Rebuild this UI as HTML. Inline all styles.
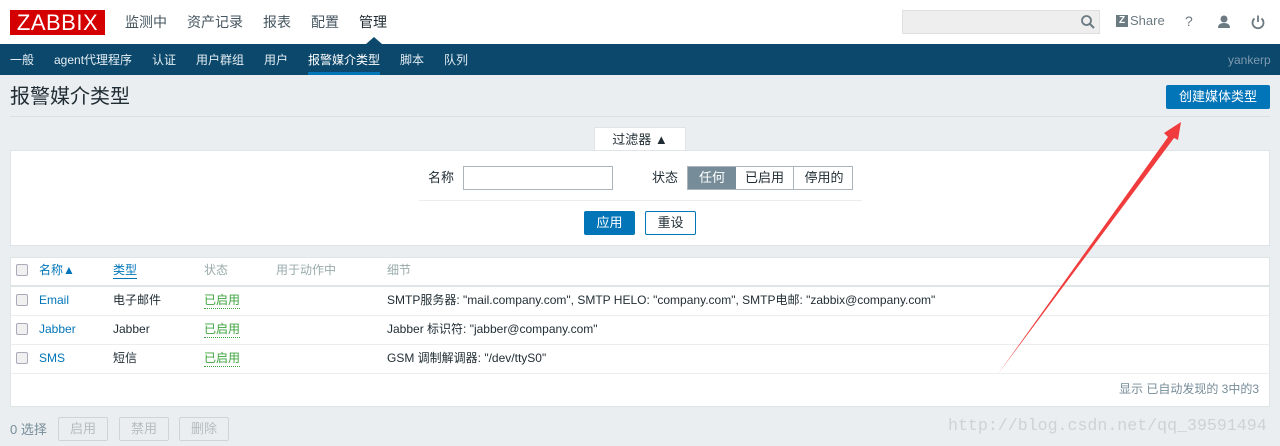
<!DOCTYPE html>
<html><head><meta charset="utf-8"><style>
*{box-sizing:border-box;margin:0;padding:0}
body{width:1280px;height:446px;overflow:hidden;background:#ebeef0;font-family:"Liberation Sans","Noto Sans CJK SC",sans-serif;font-size:12px;color:#1f2c33;position:relative}
.abs{position:absolute;line-height:16px}
.top{position:absolute;left:0;top:0;width:1280px;height:44px;background:#fff}
.logo{left:10px;top:10px;width:95px;height:25px;background:#d40000;color:#fff;font-size:22px;line-height:25px !important;text-align:center;letter-spacing:0.5px}
.mm{top:14px;font-size:14px;color:#44555f}
.nav{left:0;top:44px;width:1280px;height:31px;background:#0b486b}
.nav span{position:absolute;top:8px;line-height:16px;color:#e4eef4;font-size:12px}
.btn{background:#0275b8;color:#fff;text-align:center;border-radius:2px}
.row{position:absolute;left:10px;width:1260px;border-top:1px solid #ebeef0}
.cb{position:absolute;width:12px;height:12px;border:1px solid #aab;border-radius:2px;background:#f0f0f0;left:16px}
.lnk{color:#0275b8}
.en{color:#3ea33e;border-bottom:1px dotted #3ea33e}
.g{color:#9aa;}
.dis{position:absolute;top:417px;height:24px;border:1px solid #d0d4d6;color:#b4bcc0;font-size:13px;text-align:center;line-height:22px;width:50px;border-radius:2px}
</style></head><body>
<div class="top"></div>
<div class="abs logo">ZABBIX</div>
<div class="abs mm" style="left:125px">监测中</div>
<div class="abs mm" style="left:187px">资产记录</div>
<div class="abs mm" style="left:263px">报表</div>
<div class="abs mm" style="left:311px">配置</div>
<div class="abs mm" style="left:359px;color:#1f2c33">管理</div>
<div class="abs" style="left:366px;top:37px;width:0;height:0;border-left:8px solid transparent;border-right:8px solid transparent;border-bottom:7px solid #0b486b"></div>
<div class="abs" style="left:902px;top:10px;width:198px;height:24px;background:#eeeeee;border:1px solid #e0e0e0"></div>
<svg class="abs" style="left:1080px;top:14px" width="16" height="16"><circle cx="6.5" cy="6.5" r="4.5" fill="none" stroke="#6c7a82" stroke-width="1.8"/><line x1="10" y1="10" x2="14" y2="14" stroke="#6c7a82" stroke-width="2"/></svg>
<div class="abs" style="left:1116px;top:15px;width:12px;height:12px;background:#6c7a82;color:#fff;font-size:10px;font-weight:bold;line-height:12px;text-align:center">Z</div>
<div class="abs" style="left:1130px;top:13px;color:#6c7a82;font-size:13px">Share</div>
<div class="abs" style="left:1185px;top:13px;color:#6c7a82;font-size:14px">?</div>
<svg class="abs" style="left:1216px;top:14px" width="16" height="16"><circle cx="8" cy="5" r="3.5" fill="#6c7a82"/><path d="M2 14 Q2 9 8 9 Q14 9 14 14Z" fill="#6c7a82"/></svg>
<svg class="abs" style="left:1250px;top:14px" width="16" height="16"><path d="M4.5 4.5 A5.5 5.5 0 1 0 11.5 4.5" fill="none" stroke="#6c7a82" stroke-width="1.8"/><line x1="8" y1="1.5" x2="8" y2="8" stroke="#6c7a82" stroke-width="1.8"/></svg>
<div class="abs nav">
<span style="left:10px">一般</span><span style="left:54px">agent代理程序</span><span style="left:152px">认证</span><span style="left:196px">用户群组</span><span style="left:264px">用户</span><span style="left:308px;color:#fff">报警媒介类型</span><span style="left:400px">脚本</span><span style="left:444px">队列</span>
<span style="left:1228px;color:#7f9bb0">yankerp</span>
<div style="position:absolute;left:308px;top:28px;width:72px;height:3px;background:#0275b8"></div>
</div>
<div class="abs" style="left:10px;top:85px;font-size:20px;line-height:24px;color:#1f2c33">报警媒介类型</div>
<div class="abs btn" style="left:1166px;top:85px;width:104px;height:24px;line-height:24px;font-size:13px">创建媒体类型</div>
<div class="abs" style="left:10px;top:116px;width:1260px;height:1px;background:#dcdfe2"></div>
<div class="abs" style="left:594px;top:127px;width:92px;height:24px;background:#fff;border:1px solid #dfe4e7;border-bottom:none;text-align:center;line-height:24px;font-size:13px">过滤器 ▲</div>
<div class="abs" style="left:10px;top:150px;width:1260px;height:96px;background:#fff;border:1px solid #dfe4e7"></div>
<div class="abs" style="left:428px;top:170px;font-size:13px">名称</div>
<div class="abs" style="left:463px;top:166px;width:150px;height:24px;border:1px solid #aab4bc"></div>
<div class="abs" style="left:652px;top:170px;font-size:13px">状态</div>
<div class="abs" style="left:687px;top:166px;width:166px;height:24px;border:1px solid #aab4bc;font-size:13px;line-height:22px">
<div style="position:absolute;left:0;top:0;width:48px;height:22px;background:#768d99;color:#fff;text-align:center">任何</div>
<div style="position:absolute;left:48px;top:0;width:58px;height:22px;text-align:center;border-right:1px solid #aab4bc">已启用</div>
<div style="position:absolute;left:107px;top:0;width:58px;height:22px;text-align:center">停用的</div></div>
<div class="abs" style="left:419px;top:200px;width:443px;height:1px;background:#ebeef0"></div>
<div class="abs btn" style="left:584px;top:211px;width:51px;height:24px;line-height:24px;font-size:13px">应用</div>
<div class="abs" style="left:645px;top:211px;width:51px;height:24px;line-height:22px;font-size:13px;border:1px solid #0275b8;color:#1f2c33;text-align:center;background:#fff;border-radius:2px">重设</div>
<div class="abs" style="left:10px;top:257px;width:1260px;height:150px;background:#fff;border:1px solid #dfe4e7"></div>
<div class="abs" style="left:10px;top:285px;width:1260px;height:2px;background:#dfe4e7"></div>
<div class="cb" style="top:264px"></div><div class="abs lnk" style="left:39px;top:262px">名称▲</div>
<div class="abs lnk" style="left:113px;top:262px;border-bottom:1px solid #0275b8">类型</div>
<div class="abs g" style="left:204px;top:262px">状态</div><div class="abs g" style="left:276px;top:262px">用于动作中</div><div class="abs g" style="left:387px;top:262px">细节</div>
<div class="row" style="top:315px"></div><div class="row" style="top:344px"></div><div class="row" style="top:373px"></div>
<div class="cb" style="top:294px"></div><div class="abs lnk" style="left:39px;top:292px">Email</div><div class="abs" style="left:113px;top:292px">电子邮件</div><div class="abs en" style="left:204px;top:292px">已启用</div><div class="abs" style="left:387px;top:292px">SMTP服务器: "mail.company.com", SMTP HELO: "company.com", SMTP电邮: "zabbix@company.com"</div>
<div class="cb" style="top:323px"></div><div class="abs lnk" style="left:39px;top:321px">Jabber</div><div class="abs" style="left:113px;top:321px">Jabber</div><div class="abs en" style="left:204px;top:321px">已启用</div><div class="abs" style="left:387px;top:321px">Jabber 标识符: "jabber@company.com"</div>
<div class="cb" style="top:352px"></div><div class="abs lnk" style="left:39px;top:350px">SMS</div><div class="abs" style="left:113px;top:350px">短信</div><div class="abs en" style="left:204px;top:350px">已启用</div><div class="abs" style="left:387px;top:350px">GSM 调制解调器: "/dev/ttyS0"</div>
<div class="abs" style="left:1119px;top:381px;color:#768d99">显示 已自动发现的 3中的3</div>
<div class="abs" style="left:10px;top:422px;font-size:13px;color:#768d99">0 选择</div>
<div class="dis" style="left:58px">启用</div><div class="dis" style="left:119px">禁用</div><div class="dis" style="left:179px">删除</div>
<div class="abs" style="left:948px;top:416px;font-family:'Liberation Mono',monospace;font-size:16.6px;line-height:20px;color:#cfd2d2">http://blog.csdn.net/qq_39591494</div>
<svg class="abs" style="left:0;top:0" width="1280" height="446"><polygon points="998,374 1168,137 1164,133 1181,122 1178,140 1174,138" fill="#f03c3c"/></svg>
</body></html>
